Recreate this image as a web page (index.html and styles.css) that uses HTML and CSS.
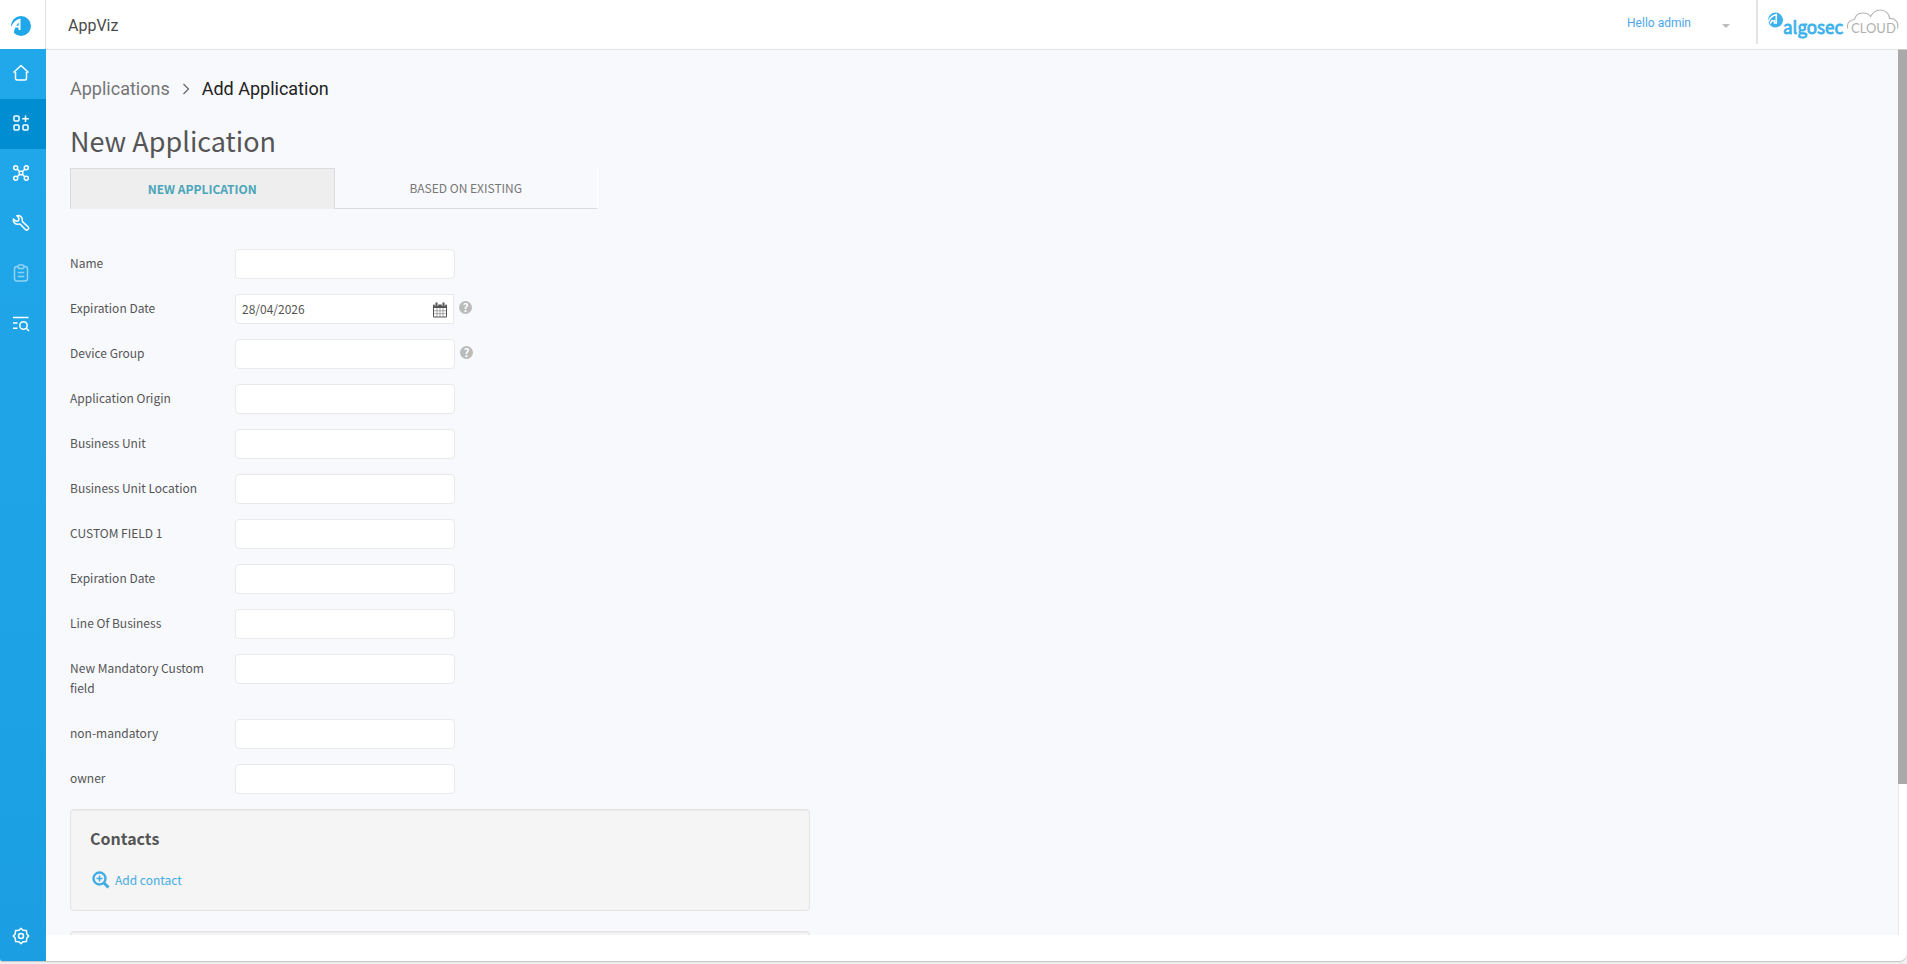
FILE: index.html
```
<!DOCTYPE html>
<html lang="en">
  <head>
    <meta charset="UTF-8" />
    <meta name="viewport" content="width=device-width, initial-scale=1.0" />
    <title>AppViz - Add Application</title>
    <link rel="stylesheet" href="styles.css">
  </head>

  <body>
    <div class="window">
      <!-- HEADER -->
      <header class="topbar">
        <a href="#" class="topbar-logo" aria-label="AlgoSec">
          <svg width="20" height="20" viewBox="0 0 20 20">
            <circle cx="10" cy="10" r="10" fill="#20a7e9" />
            <path d="M-1 13C1 7 4.500 3.500 9.500 2.500V14H7.500V11.500H4.500C3.500 13 3 14.500 3 17L1 18Z" fill="#fff" />
            <path d="M0.500 11C2 6 4 3.500 7.500 2L6 1.500C2.500 3 0.500 6 0.500 11Z" fill="#20a7e9" />
            <path d="M7.700 6.200V9.800H5.200Z" fill="#20a7e9" />
          </svg>
        </a>
        <span class="product">AppViz</span>
        <button type="button" class="user-menu">
          Hello admin
          <span class="caret"></span>
        </button>
        <div class="brand">
          <svg width="132" height="34" viewBox="0 0 132 34">
            <circle cx="7.500" cy="12" r="7.500" fill="#3db2ec" />
            <path d="M0 14.500C1.500 10 4 7.500 8.300 6.500V15H6.500V12.800H3.800L2.200 15.500" fill="none" stroke="#fff" stroke-width="1.500" />
            <text x="15" y="26" class="brand-name">algosec</text>
            <path d="M79.500 20.500C78.500 16 81 12 86.500 11.500C87.500 7 91 5 95 5C98.500 5 101 6 102.500 8.500C105 4.500 108.500 2 112 2C117.500 2 121.500 5.500 121.500 10.500C127.500 10 131 14.500 129.500 20.500" fill="none" stroke="#b5b5b5" stroke-width="1.200" />
            <text x="83" y="25" class="brand-cloud">CLOUD</text>
          </svg>
        </div>
      </header>

      <div class="body">
        <!-- SIDEBAR -->
        <nav class="sidebar">
          <a href="#" aria-label="Home">
            <svg width="18" height="18" viewBox="0 0 18 18"><path d="M1.500 8.500L9 1.500L16.500 8.500M3.500 8V14.500Q3.500 16 5 16H13Q14.500 16 14.500 14.500V8" /></svg>
          </a>
          <a href="#" class="active" aria-label="Applications">
            <svg width="18" height="18" viewBox="0 0 18 18"><rect x="2" y="2" width="5" height="5" rx="1" /><rect x="2" y="11" width="5" height="5" rx="1" /><rect x="11" y="11" width="5" height="5" rx="1" /><path d="M13.500 1.500V8M10.200 4.700H16.800" /></svg>
          </a>
          <a href="#" aria-label="Network">
            <svg width="18" height="18" viewBox="0 0 18 18"><circle cx="3.700" cy="3.700" r="2" /><circle cx="14.300" cy="3.700" r="2" /><circle cx="3.700" cy="14.300" r="2" /><circle cx="14.300" cy="14.300" r="2" /><rect x="7.300" y="7.300" width="3.400" height="3.400" rx="1" /><path d="M5.200 5.200L7.400 7.400M12.800 5.200L10.600 7.400M5.200 12.800L7.400 10.600M12.800 12.800L10.600 10.600" /></svg>
          </a>
          <a href="#" aria-label="Tools">
            <svg width="18" height="18" viewBox="0 0 18 18"><path d="M5 1.700C7.500 .8 10.500 2.700 10.300 6C10.200 7 10.200 7.300 10.700 7.900L16 12.800C17.600 14.500 15.500 17 13.600 15.700L8.500 10.400C8 9.900 7.500 9.900 6.500 10.200C3.500 10.700 .7 8 1.500 5L4 7.200L6.500 6.700L7 4.200Z" /></svg>
          </a>
          <a href="#" class="dimmed" aria-label="Reports">
            <svg width="18" height="18" viewBox="0 0 18 18"><rect x="2.500" y="2.500" width="13" height="14.500" rx="2.500" /><rect x="6" y="1" width="6" height="3.500" rx="1.500" fill="#20a5e8" /><path d="M5.800 8.500H12.200M5.800 12.500H12.200" /></svg>
          </a>
          <a href="#" aria-label="Search log">
            <svg width="18" height="18" viewBox="0 0 18 18"><path d="M1 3.500H16.500M1 9H5.500M1 14.300H5.500M14.300 14.300L17 17" /><circle cx="11.500" cy="11.500" r="3.700" /></svg>
          </a>
          <a href="#" class="settings" aria-label="Settings">
            <svg width="18" height="18" viewBox="0 0 18 18"><path d="M9 1.300L11 3.200L14.400 3.600L14.800 7L16.700 9L14.800 11L14.400 14.400L11 14.800L9 16.700L7 14.800L3.600 14.400L3.200 11L1.300 9L3.200 7L3.600 3.600L7 3.200Z" /><circle cx="9" cy="9" r="2.500" /></svg>
          </a>
        </nav>

        <!-- CONTENT -->
        <main class="content">
          <div class="breadcrumb">
            <a href="#">Applications</a>
            <svg width="8" height="12" viewBox="0 0 8 12"><path d="M1.500 1L6.500 6L1.500 11" fill="none" stroke="#666" stroke-width="1.200" /></svg>
            <span>Add Application</span>
          </div>

          <h1>New Application</h1>

          <div class="tabs">
            <button type="button" class="tab selected">NEW APPLICATION</button>
            <button type="button" class="tab">BASED ON EXISTING</button>
          </div>

          <form>
            <div class="row">
              <label for="name">Name</label>
              <input type="text" id="name">
            </div>
            <div class="row">
              <label for="expiration">Expiration Date</label>
              <div class="date">
                <input type="text" id="expiration" value="28/04/2026">
                <svg width="14" height="16" viewBox="0 0 14 16">
                  <path d="M1 2.500H13Q14 2.500 14 3.500V14.500Q14 15.500 13 15.500H1Q0 15.500 0 14.500V3.500Q0 2.500 1 2.500Z" fill="#555" />
                  <path d="M1 6H13V14.500H1Z" fill="#fff" />
                  <path d="M4 6V15M7 6V15M10 6V15M1 8.800H13M1 11.600H13" stroke="#777" stroke-width="0.600" />
                  <path d="M3.500 0.500V4M10.500 0.500V4" stroke="#fff" stroke-width="3.500" />
                  <path d="M3.500 0.500V4M10.500 0.500V4" stroke="#555" stroke-width="2" />
                </svg>
              </div>
              <span class="help">?</span>
            </div>
            <div class="row">
              <label for="device">Device Group</label>
              <input type="text" id="device">
              <span class="help">?</span>
            </div>
            <div class="row">
              <label for="origin">Application Origin</label>
              <input type="text" id="origin">
            </div>
            <div class="row">
              <label for="unit">Business Unit</label>
              <input type="text" id="unit">
            </div>
            <div class="row">
              <label for="location">Business Unit Location</label>
              <input type="text" id="location">
            </div>
            <div class="row">
              <label for="custom1">CUSTOM FIELD 1</label>
              <input type="text" id="custom1">
            </div>
            <div class="row">
              <label for="expiration2">Expiration Date</label>
              <input type="text" id="expiration2">
            </div>
            <div class="row">
              <label for="line">Line Of Business</label>
              <input type="text" id="line">
            </div>
            <div class="row">
              <label for="mandatory">New Mandatory Custom field</label>
              <input type="text" id="mandatory">
            </div>
            <div class="row">
              <label for="nonmandatory">non-mandatory</label>
              <input type="text" id="nonmandatory">
            </div>
            <div class="row">
              <label for="owner">owner</label>
              <input type="text" id="owner">
            </div>

            <section class="well">
              <h2>Contacts</h2>
              <a href="#" class="add">
                <svg width="18" height="18" viewBox="0 0 18 18"><circle cx="7.500" cy="7.500" r="6" fill="none" stroke="#41ace4" stroke-width="2.400" /><path d="M12 12L16.500 16.500" stroke="#41ace4" stroke-width="3" /><path d="M7.500 4.500V10.500M4.500 7.500H10.500" stroke="#41ace4" stroke-width="1.500" /></svg>
                Add contact
              </a>
            </section>
            <section class="well"></section>
          </form>
        </main>
        <div class="scrollbar"><div class="thumb"></div></div>
      </div>
    </div>
  </body>
</html>
```
FILE: styles.css
```
* {
  box-sizing: border-box;
}
body {
  margin: 0;
  height: 100vh;
  padding-bottom: 3px;
  background-color: #f0f0f0;
  color: #555;
  font-family: "Noto Sans CJK SC", sans-serif;
  font-size: 12px;
  line-height: 20px;
}
a {
  color: #41ace4;
  text-decoration: none;
}
button,
input {
  font-family: inherit;
  color: inherit;
}
button {
  cursor: pointer;
}
.window {
  display: flex;
  flex-direction: column;
  height: 100%;
  background-color: #fff;
  border-radius: 0 0 8px 2px;
  box-shadow: 0 1px 1px #c4c4c4;
  overflow: hidden;
}

/* header */
.topbar {
  display: flex;
  flex: none;
  height: 49px;
  font-family: Roboto, sans-serif;
}
.topbar-logo {
  display: flex;
  align-items: center;
  justify-content: center;
  width: 46px;
  padding: 3px 4px 0 0;
  border-right: 1px solid #e0e0e0;
}
.product {
  flex: 1;
  padding-left: 22px;
  font-size: 16px;
  line-height: 52px;
  color: #4a4a4a;
}
.user-menu {
  display: flex;
  align-items: center;
  gap: 31px;
  height: 45px;
  padding: 0 26px 0 0;
  border: none;
  background: none;
  font-size: 12px;
  color: #4ba6ec;
}
.caret {
  margin-top: 6px;
  border: 4px solid transparent;
  border-top-color: #bbb;
  border-bottom: none;
}
.brand {
  height: 44px;
  padding: 8px 7px 0 10px;
  border-left: 2px solid #e3e3e3;
}
.brand-name {
  font: 17px "Noto Sans CJK SC", sans-serif;
  fill: #3db2ec;
  stroke: #3db2ec;
  stroke-width: 0.8px;
}
.brand-cloud {
  font: 13px Lato, sans-serif;
  fill: #b0b0b0;
}

/* sidebar */
.body {
  display: flex;
  flex: 1;
  min-height: 0;
}
.sidebar {
  display: flex;
  flex-direction: column;
  flex: none;
  width: 46px;
  background: linear-gradient(#21a8ea, #1b9fe2);
}
.sidebar a {
  display: flex;
  align-items: center;
  justify-content: center;
  height: 50px;
  padding: 0 4px 2px 0;
}
.sidebar svg {
  fill: none;
  stroke: #fff;
  stroke-width: 1.5;
  stroke-linejoin: round;
}
.sidebar .active {
  background-color: #008dd1;
}
.sidebar .dimmed svg {
  opacity: 0.5;
}
.sidebar .settings {
  margin-top: auto;
  padding-bottom: 0;
}

/* content */
.content {
  flex: 1;
  margin-bottom: 26px;
  padding: 26px 24px 0;
  border-top: 1px solid #e3e4e6;
  background-color: #f8f9fd;
  overflow: hidden;
}
.scrollbar {
  width: 9px;
  margin-bottom: 26px;
  border-left: 1px solid #e8e8e8;
  background-color: #fff;
}
.thumb {
  height: 83%;
  margin-left: -1px;
  border-top: 1px solid #ccc;
  background-color: #a9a9a9;
}
.breadcrumb {
  display: flex;
  align-items: center;
  gap: 12px;
  font-family: Roboto, sans-serif;
  font-size: 18px;
  line-height: 26px;
  color: #222;
}
.breadcrumb a {
  color: #757575;
}
h1 {
  margin: 19px 0 7px;
  font-size: 27px;
  font-weight: normal;
  line-height: 40px;
}
.tabs {
  display: flex;
  width: 528px;
  margin-bottom: 40px;
}
.tab {
  flex: 1;
  height: 41px;
  padding: 0 0 2px;
  border: 1px solid #fff;
  border-width: 0 1px 1px 0;
  border-bottom-color: #d9dbdc;
  background: none;
  font-size: 12px;
  color: #777;
}
.tab.selected {
  border: 1px solid #d9dbdc;
  border-bottom: none;
  background-color: #eee;
  font-weight: bold;
  color: #4ba5b9;
}

/* form */
.row {
  display: flex;
  align-items: flex-start;
  margin-bottom: 15px;
}
label {
  width: 165px;
  padding: 4px 30px 6px 0;
}
input {
  width: 220px;
  height: 30px;
  padding: 3px 6px 5px;
  border: 1px solid #e8e9ea;
  border-radius: 4px;
  background-color: #fff;
  font-size: 12px;
}
.date {
  position: relative;
}
.date input {
  width: 219px;
  border-radius: 4px 0 0 4px;
}
.date svg {
  position: absolute;
  top: 8px;
  right: 7px;
}
.help {
  width: 13px;
  height: 13px;
  margin: 7px 0 0 5px;
  border-radius: 50%;
  background-color: #bbb;
  color: #fff;
  font-size: 11px;
  font-weight: bold;
  line-height: 12px;
  text-align: center;
}
.well {
  width: 740px;
  min-height: 102px;
  margin-bottom: 20px;
  padding: 18px 19px;
  border: 1px solid #e3e3e3;
  border-radius: 4px;
  background-color: #f5f5f5;
  box-shadow: inset 0 1px 1px rgba(0, 0, 0, 0.05);
}
h2 {
  margin: 0 0 22px;
  font-size: 16px;
  line-height: 20px;
}
.add {
  display: flex;
  align-items: center;
  gap: 5px;
  padding-left: 2px;
}
```
